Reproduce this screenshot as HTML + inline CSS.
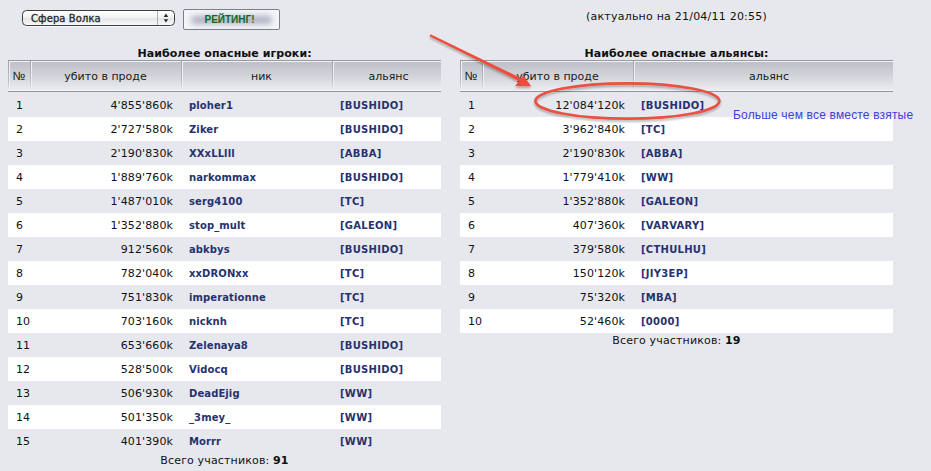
<!DOCTYPE html>
<html lang="ru"><head><meta charset="utf-8"><title>Рейтинг</title><style>
html,body{margin:0;padding:0;}
body{width:931px;height:471px;overflow:hidden;background:#e7e8ed;font-family:"DejaVu Sans","Liberation Sans",sans-serif;font-size:11px;color:#111;position:relative;}
.abs{position:absolute;}
.sel{left:22px;top:10px;width:151px;height:14px;border:1px solid #3e3e3e;border-radius:4.5px;background:linear-gradient(#fff,#f1f1f3 50%,#e4e4e8 51%,#fafafa);box-shadow:0 1px 0 rgba(255,255,255,.8);}
.sel span{position:absolute;left:8px;top:1px;letter-spacing:0.15px;-webkit-text-stroke:0.35px #2b2b2b;line-height:14px;font-size:11px;color:#2b2b2b;font-family:"DejaVu Sans Condensed","DejaVu Sans",sans-serif;font-stretch:condensed;}
.sel i{position:absolute;left:134px;top:0;width:1px;height:14px;background:#b0b0b4;}
.btn{left:183px;top:9px;width:95px;height:19px;border:1px solid #7d7f88;border-radius:2px;background:#f5f6f8;overflow:hidden;}
.btn:before{content:"";position:absolute;left:7px;right:7px;top:6px;height:8px;background:#a9aebf;filter:blur(3px);border-radius:4px;}
.btn span{position:absolute;left:-4px;right:0;top:-0.5px;text-align:center;line-height:19px;font-family:"Liberation Sans",sans-serif;font-weight:bold;font-size:10px;color:#14691a;}
.cap{letter-spacing:0.06px;font-weight:bold;text-align:center;font-size:11px;line-height:14px;color:#111;}
.note{letter-spacing:0.22px;font-size:11px;text-align:center;line-height:14px;color:#111;}
table{border-collapse:separate;border-spacing:0;table-layout:fixed;position:absolute;}
th{height:32px;padding:0;font-weight:normal;font-size:11px;color:#1a1a1a;text-align:center;background:linear-gradient(#a0a2aa,#b8bac1 60%,rgba(200,202,208,0)) 0 0/1px 100% no-repeat,linear-gradient(#f4f5f8,rgba(244,245,248,0.6)) 1px 0/1px 100% no-repeat,linear-gradient(#f2f3f6,#f2f3f6) 0 0/100% 1px no-repeat,linear-gradient(#f2f3f6,#f2f3f6) 0 100%/100% 1px no-repeat,linear-gradient(#bcbfc6 0%,#d2d4d9 50%,#edeef1 100%);border-top:1px solid #97989e;border-bottom:1px solid #94959a;box-sizing:border-box;}
th.nik{padding-left:10px;}
th.al1{padding-left:4px;}
th.al2{padding-left:12px;}
td.b.a{letter-spacing:0.27px;}
th .no{font-family:"Liberation Sans",sans-serif;font-size:12px;}
td{height:24px;padding:0 8px;font-size:11px;box-sizing:border-box;white-space:nowrap;overflow:hidden;}
tr.w td{background:#fff;}
td.sp{height:1px;padding:0;}
td.n{text-align:left;}
td.k{text-align:right;padding-right:8px;letter-spacing:0.12px;}
td.b{font-weight:bold;color:#263270;font-size:10px;padding-left:8px;letter-spacing:0.1px;}
.foot{letter-spacing:0.15px;text-align:center;font-size:11px;line-height:14px;}
.foot b{font-weight:bold;}
.ann{letter-spacing:0.17px;left:733px;top:108px;font-family:"Liberation Sans",sans-serif;font-size:12px;color:#4141da;white-space:nowrap;line-height:14px;}
</style></head><body>
<div class="abs sel"><span>Сфера Волка</span><i></i><svg class="abs" style="left:139px;top:2px" width="9" height="12" viewBox="0 0 9 12"><path d="M1.7 3.9 L3.95 0.5 L6.2 3.9 Z M1.7 6.2 L3.95 9.6 L6.2 6.2 Z" fill="#2a2a2a"/></svg></div>
<div class="abs btn"><span>РЕЙТИНГ!</span></div>
<div class="abs note" style="left:460px;top:10px;width:433px">(актуально на 21/04/11 20:55)</div>
<div class="abs cap" style="left:8px;top:47px;width:433px">Наиболее опасные игроки:</div>
<div class="abs cap" style="left:460px;top:47px;width:433px">Наиболее опасные альянсы:</div>
<table style="left:8px;top:60px;width:433px"><colgroup><col style="width:22px"><col style="width:151px"><col style="width:151px"><col style="width:109px"></colgroup>
<tr><th><span class="no">№</span></th><th>убито в проде</th><th class="nik">ник</th><th class="al1">альянс</th></tr>
<tr><td class="sp" colspan="4"></td></tr>
<tr><td class="n">1</td><td class="k">4'855'860k</td><td class="b">ploher1</td><td class="b a">[BUSHIDO]</td></tr>
<tr class="w"><td class="n">2</td><td class="k">2'727'580k</td><td class="b">Ziker</td><td class="b a">[BUSHIDO]</td></tr>
<tr><td class="n">3</td><td class="k">2'190'830k</td><td class="b">XXxLLlll</td><td class="b a">[ABBA]</td></tr>
<tr class="w"><td class="n">4</td><td class="k">1'889'760k</td><td class="b">narkommax</td><td class="b a">[BUSHIDO]</td></tr>
<tr><td class="n">5</td><td class="k">1'487'010k</td><td class="b">serg4100</td><td class="b a">[TC]</td></tr>
<tr class="w"><td class="n">6</td><td class="k">1'352'880k</td><td class="b">stop_mult</td><td class="b a">[GALEON]</td></tr>
<tr><td class="n">7</td><td class="k">912'560k</td><td class="b">abkbys</td><td class="b a">[BUSHIDO]</td></tr>
<tr class="w"><td class="n">8</td><td class="k">782'040k</td><td class="b">xxDRONxx</td><td class="b a">[TC]</td></tr>
<tr><td class="n">9</td><td class="k">751'830k</td><td class="b">imperationne</td><td class="b a">[TC]</td></tr>
<tr class="w"><td class="n">10</td><td class="k">703'160k</td><td class="b">nicknh</td><td class="b a">[TC]</td></tr>
<tr><td class="n">11</td><td class="k">653'660k</td><td class="b">Zelenaya8</td><td class="b a">[BUSHIDO]</td></tr>
<tr class="w"><td class="n">12</td><td class="k">528'500k</td><td class="b">Vidocq</td><td class="b a">[BUSHIDO]</td></tr>
<tr><td class="n">13</td><td class="k">506'930k</td><td class="b">DeadEjig</td><td class="b a">[WW]</td></tr>
<tr class="w"><td class="n">14</td><td class="k">501'350k</td><td class="b">_3mey_</td><td class="b a">[WW]</td></tr>
<tr><td class="n">15</td><td class="k">401'390k</td><td class="b">Morrr</td><td class="b a">[WW]</td></tr>
</table>
<table style="left:460px;top:60px;width:433px"><colgroup><col style="width:22px"><col style="width:151px"><col style="width:260px"></colgroup>
<tr><th><span class="no">№</span></th><th>убито в проде</th><th class="al2">альянс</th></tr>
<tr><td class="sp" colspan="3"></td></tr>
<tr><td class="n">1</td><td class="k">12'084'120k</td><td class="b a">[BUSHIDO]</td></tr>
<tr class="w"><td class="n">2</td><td class="k">3'962'840k</td><td class="b a">[TC]</td></tr>
<tr><td class="n">3</td><td class="k">2'190'830k</td><td class="b a">[ABBA]</td></tr>
<tr class="w"><td class="n">4</td><td class="k">1'779'410k</td><td class="b a">[WW]</td></tr>
<tr><td class="n">5</td><td class="k">1'352'880k</td><td class="b a">[GALEON]</td></tr>
<tr class="w"><td class="n">6</td><td class="k">407'360k</td><td class="b a">[VARVARY]</td></tr>
<tr><td class="n">7</td><td class="k">379'580k</td><td class="b a">[CTHULHU]</td></tr>
<tr class="w"><td class="n">8</td><td class="k">150'120k</td><td class="b a">[JIY3EP]</td></tr>
<tr><td class="n">9</td><td class="k">75'320k</td><td class="b a">[MBA]</td></tr>
<tr class="w"><td class="n">10</td><td class="k">52'460k</td><td class="b a">[0000]</td></tr>
</table>
<div class="abs foot" style="left:8px;top:454px;width:433px">Всего участников: <b>91</b></div>
<div class="abs foot" style="left:460px;top:334px;width:433px">Всего участников: <b>19</b></div>
<div class="abs ann">Больше чем все вместе взятые</div>
<svg class="abs" style="left:0;top:0" width="931" height="471" viewBox="0 0 931 471">
<defs><filter id="sh" x="-5%" y="-20%" width="110%" height="150%"><feGaussianBlur in="SourceAlpha" stdDeviation="1.2"/><feOffset dx="0" dy="1.5"/><feComponentTransfer><feFuncA type="linear" slope="0.28"/></feComponentTransfer><feMerge><feMergeNode/><feMergeNode in="SourceGraphic"/></feMerge></filter></defs>
<g filter="url(#sh)">
<polygon points="430.49,34.31 520.8,77.98 519.2,81.22 429.51,36.29" fill="#ee4d3d"/>
<polygon points="531.2,86.2 515.2,86 523.3,75.2" fill="#ee4d3d"/>
<ellipse cx="627.4" cy="101" rx="92" ry="17.7" fill="none" stroke="#e95144" stroke-width="2.7"/>
</g></svg>
</body></html>
